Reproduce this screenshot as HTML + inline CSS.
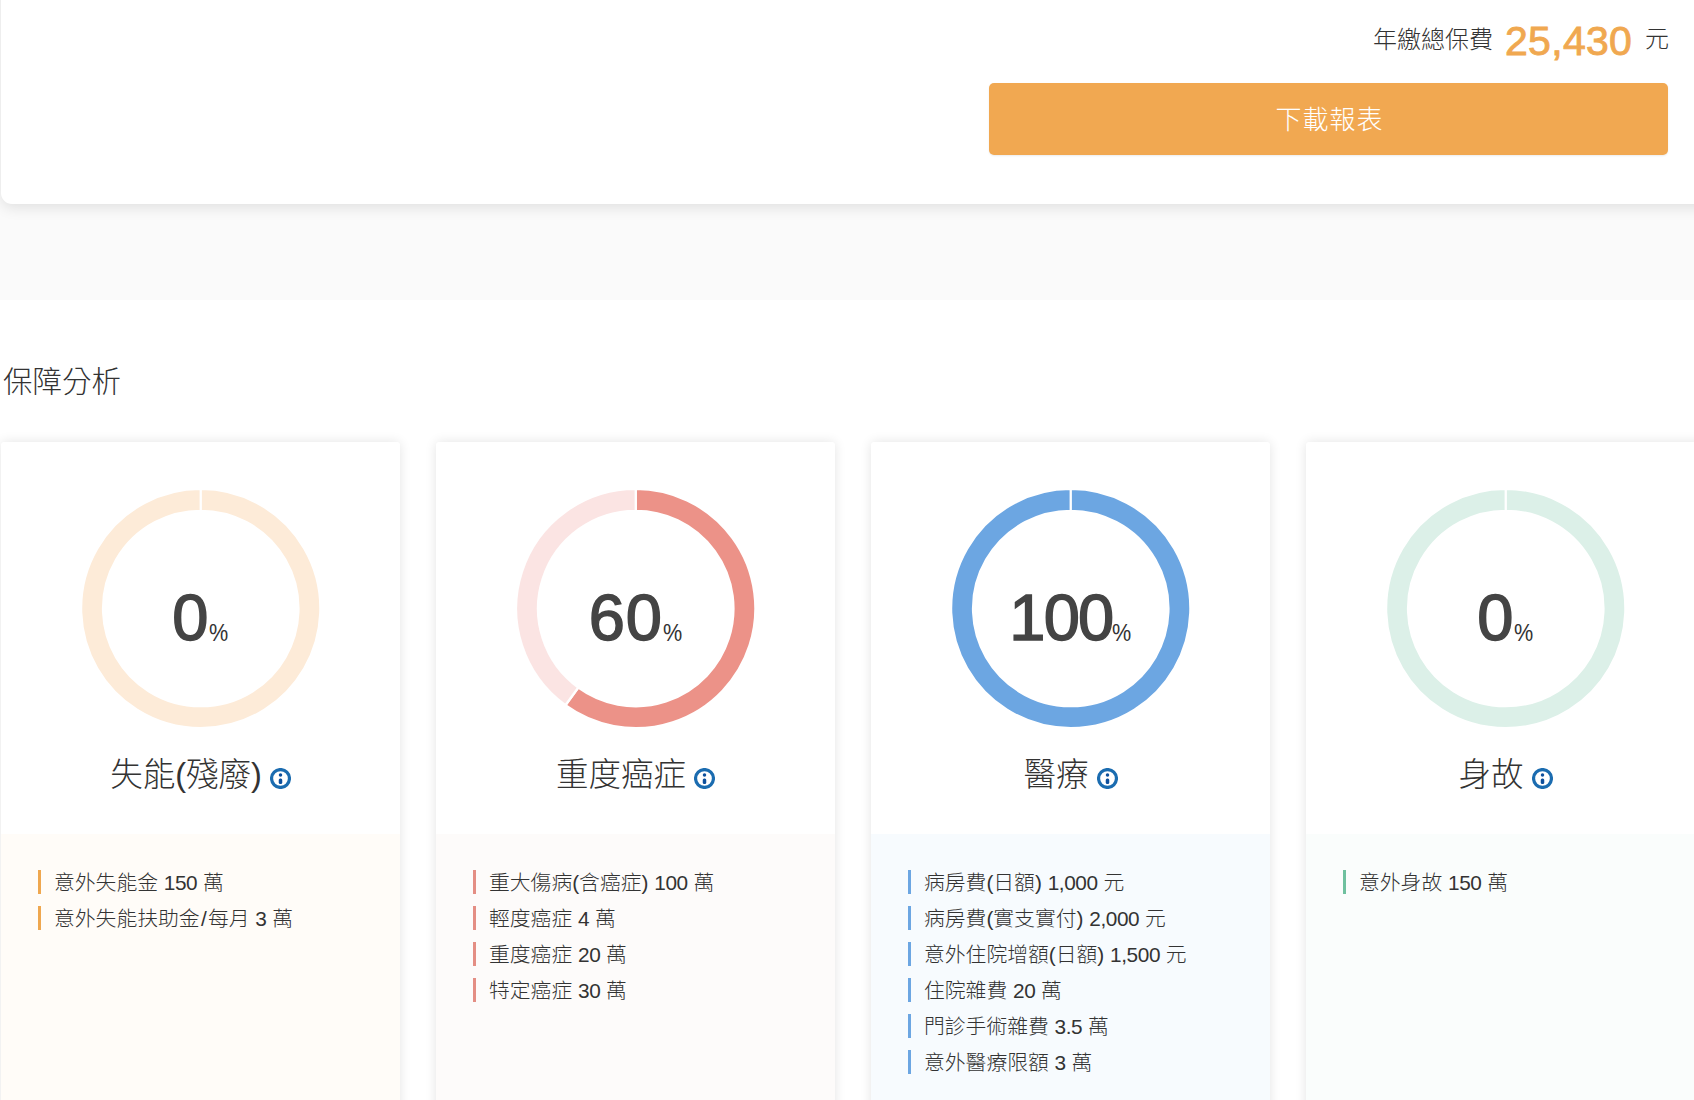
<!DOCTYPE html>
<html lang="zh-Hant">
<head>
<meta charset="utf-8">
<title>保障分析</title>
<style>
*{box-sizing:border-box;margin:0;padding:0}
html,body{width:1694px;height:1100px;overflow:hidden;background:#fff}
body{position:relative;font-family:"Liberation Sans","Noto Sans CJK TC",sans-serif;color:#333;font-weight:300}
.band{position:absolute;left:0;top:0;width:1694px;height:300px;background:#fafafa}
.top{position:absolute;left:1px;top:-40px;width:1800px;height:244px;background:#fff;border-radius:11px;box-shadow:0 4px 14px rgba(0,0,0,.10)}
.fee span{position:absolute;white-space:nowrap;line-height:1}
.fee .lab{font-size:24px;color:#333;left:1373px;top:28px}
.fee .num{font-size:41px;color:#f0a850;font-weight:400;-webkit-text-stroke:.9px #f0a850;letter-spacing:.3px;left:1505px;top:21px}
.fee .unit{font-size:24px;color:#333;left:1645px;top:27px}
.btn{position:absolute;left:989px;top:83px;width:679px;height:72px;background:#f1a851;border-radius:5px;color:#fff;font-size:26px;line-height:75px;text-align:center;letter-spacing:1px;text-indent:2px;box-shadow:0 1px 2px rgba(0,0,0,.08)}
h2{position:absolute;left:3px;top:362px;font-size:29.5px;line-height:40px;font-weight:300;color:#333;white-space:nowrap}
.card{position:absolute;top:442px;width:399px;height:700px;background:#fff;border-radius:3px;box-shadow:0 0 12px rgba(0,0,0,.11);overflow:hidden}
.card svg{position:absolute;left:0;top:0}
.pct{position:absolute;left:0;width:100%;top:136px;height:80px;text-align:center;white-space:nowrap;line-height:80px;color:#444}
.pct b{font-size:65px;font-weight:400;-webkit-text-stroke:1.5px #444;letter-spacing:1px}
.pct i{font-style:normal;font-size:24px;color:#333;margin-left:0;font-weight:400;display:inline-block;transform:scaleX(.9);transform-origin:left;position:relative;top:1px;margin-right:-2px}
.ttl{position:absolute;left:0;width:100%;top:309px;height:48px;line-height:48px;text-align:center;font-size:32.5px;white-space:nowrap;color:#333}
.ttl svg{position:static;vertical-align:-3.4px;margin-left:8px}
.low{position:absolute;left:0;top:392px;width:100%;height:320px;padding:31px 0 0 37px}
.low li{list-style:none;height:36px;line-height:36px;font-size:20.8px;white-space:nowrap;position:relative;padding-left:16px}
.low .t{color:#333}
.low .d{letter-spacing:-.4px}
.low .sl{padding:0 1.3px}
.low li:before{content:"";position:absolute;left:0;top:5px;width:3px;height:24px;background:currentColor}
</style>
</head>
<body>
<div class="band"></div>
<div class="top"></div>
<div class="fee"><span class="lab">年繳總保費</span><span class="num">25,430</span><span class="unit">元</span></div>
<div class="btn">下載報表</div>
<h2>保障分析</h2>

<div class="card" style="left:1px">
<svg width="399" height="392" viewBox="0 0 399 392"><path d="M199.75 46.85A119.65 119.65 0 1 1 199.74 46.85L199.74 68.80A97.7 97.7 0 1 0 199.75 68.80Z" fill="#fdebd8" stroke="#fff" stroke-width="2.3" stroke-linejoin="miter"/></svg>
<div class="pct"><b>0</b><i>%</i></div>
<div class="ttl">失能(殘廢)<svg width="21" height="21" viewBox="0 0 21 21"><circle cx="10.5" cy="10.5" r="8.95" fill="#fff" stroke="#1b6cb0" stroke-width="3.2"/><circle cx="10.5" cy="6.9" r="1.75" fill="#0d4f9c"/><rect x="8.75" y="10.6" width="3.5" height="5.3" rx="1.5" fill="#0d4f9c"/></svg></div>
<ul class="low" style="background:#fffcf8;color:#efa74f"><li><span class="t">意外失能金 <span class="d">150</span> 萬</span></li><li><span class="t">意外失能扶助金<span class="sl">/</span>每月 <span class="d">3</span> 萬</span></li></ul>
</div>
<div class="card" style="left:436px">
<svg width="399" height="392" viewBox="0 0 399 392"><path d="M199.75 46.85A119.65 119.65 0 1 1 129.42 263.30L142.32 245.54A97.7 97.7 0 1 0 199.75 68.80Z" fill="#ec9288" stroke="#fff" stroke-width="2.3" stroke-linejoin="miter"/>
<path d="M129.42 263.30A119.65 119.65 0 0 1 199.75 46.85L199.75 68.80A97.7 97.7 0 0 0 142.32 245.54Z" fill="#fbe4e3" stroke="#fff" stroke-width="2.3" stroke-linejoin="miter"/></svg>
<div class="pct"><b>60</b><i>%</i></div>
<div class="ttl">重度癌症<svg width="21" height="21" viewBox="0 0 21 21"><circle cx="10.5" cy="10.5" r="8.95" fill="#fff" stroke="#1b6cb0" stroke-width="3.2"/><circle cx="10.5" cy="6.9" r="1.75" fill="#0d4f9c"/><rect x="8.75" y="10.6" width="3.5" height="5.3" rx="1.5" fill="#0d4f9c"/></svg></div>
<ul class="low" style="background:#fdfbfa;color:#e48e84"><li><span class="t">重大傷病(含癌症) <span class="d">100</span> 萬</span></li><li><span class="t">輕度癌症 <span class="d">4</span> 萬</span></li><li><span class="t">重度癌症 <span class="d">20</span> 萬</span></li><li><span class="t">特定癌症 <span class="d">30</span> 萬</span></li></ul>
</div>
<div class="card" style="left:871px">
<svg width="399" height="392" viewBox="0 0 399 392"><path d="M199.75 46.85A119.65 119.65 0 1 1 199.74 46.85L199.74 68.80A97.7 97.7 0 1 0 199.75 68.80Z" fill="#6ca6e2" stroke="#fff" stroke-width="2.3" stroke-linejoin="miter"/></svg>
<div class="pct"><b style="letter-spacing:-1.8px">100</b><i>%</i></div>
<div class="ttl">醫療<svg width="21" height="21" viewBox="0 0 21 21"><circle cx="10.5" cy="10.5" r="8.95" fill="#fff" stroke="#1b6cb0" stroke-width="3.2"/><circle cx="10.5" cy="6.9" r="1.75" fill="#0d4f9c"/><rect x="8.75" y="10.6" width="3.5" height="5.3" rx="1.5" fill="#0d4f9c"/></svg></div>
<ul class="low" style="background:#f7fbfe;color:#6ca6e2"><li><span class="t">病房費(日額) <span class="d">1,000</span> 元</span></li><li><span class="t">病房費(實支實付) <span class="d">2,000</span> 元</span></li><li><span class="t">意外住院增額(日額) <span class="d">1,500</span> 元</span></li><li><span class="t">住院雜費 <span class="d">20</span> 萬</span></li><li><span class="t">門診手術雜費 <span class="d">3.5</span> 萬</span></li><li><span class="t">意外醫療限額 <span class="d">3</span> 萬</span></li></ul>
</div>
<div class="card" style="left:1306px">
<svg width="399" height="392" viewBox="0 0 399 392"><path d="M199.75 46.85A119.65 119.65 0 1 1 199.74 46.85L199.74 68.80A97.7 97.7 0 1 0 199.75 68.80Z" fill="#dcf0e8" stroke="#fff" stroke-width="2.3" stroke-linejoin="miter"/></svg>
<div class="pct"><b>0</b><i>%</i></div>
<div class="ttl">身故<svg width="21" height="21" viewBox="0 0 21 21"><circle cx="10.5" cy="10.5" r="8.95" fill="#fff" stroke="#1b6cb0" stroke-width="3.2"/><circle cx="10.5" cy="6.9" r="1.75" fill="#0d4f9c"/><rect x="8.75" y="10.6" width="3.5" height="5.3" rx="1.5" fill="#0d4f9c"/></svg></div>
<ul class="low" style="background:#fafdfc;color:#6fc19f"><li><span class="t">意外身故 <span class="d">150</span> 萬</span></li></ul>
</div>
</body>
</html>
